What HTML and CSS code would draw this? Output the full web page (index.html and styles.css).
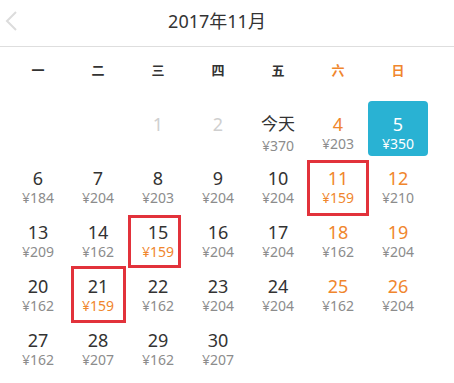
FILE: index.html
```html
<!DOCTYPE html>
<html lang="zh-CN">
<head>
<meta charset="utf-8">
<link rel="stylesheet" href="styles.css">
</head>
<body>
<div class="cal">
  <div class="head">
    <svg class="back" width="20" height="40" viewBox="0 0 20 40"><polyline points="16,12 7,21 16,30" fill="none" stroke="#dcdcdc" stroke-width="2"/></svg>
    <div class="title">2017年11月</div>
  </div>
  <div class="week">
    <span>一</span><span>二</span><span>三</span><span>四</span><span>五</span><span class="we">六</span><span class="we">日</span>
  </div>
  <div class="grid">
    <div class="cell"></div>
    <div class="cell"></div>
    <div class="cell off"><b>1</b></div>
    <div class="cell off"><b>2</b></div>
    <div class="cell today"><b>今天</b><i>¥370</i></div>
    <div class="cell we"><b>4</b><i>¥203</i></div>
    <div class="cell sel"><b>5</b><i>¥350</i></div>

    <div class="cell"><b>6</b><i>¥184</i></div>
    <div class="cell"><b>7</b><i>¥204</i></div>
    <div class="cell"><b>8</b><i>¥203</i></div>
    <div class="cell"><b>9</b><i>¥204</i></div>
    <div class="cell"><b>10</b><i>¥204</i></div>
    <div class="cell we low"><b>11</b><i>¥159</i><span class="mark m11"></span></div>
    <div class="cell we"><b>12</b><i>¥210</i></div>

    <div class="cell"><b>13</b><i>¥209</i></div>
    <div class="cell"><b>14</b><i>¥162</i></div>
    <div class="cell low"><b>15</b><i>¥159</i><span class="mark m15"></span></div>
    <div class="cell"><b>16</b><i>¥204</i></div>
    <div class="cell"><b>17</b><i>¥204</i></div>
    <div class="cell we"><b>18</b><i>¥162</i></div>
    <div class="cell we"><b>19</b><i>¥204</i></div>

    <div class="cell"><b>20</b><i>¥162</i></div>
    <div class="cell low"><b>21</b><i>¥159</i><span class="mark m21"></span></div>
    <div class="cell"><b>22</b><i>¥162</i></div>
    <div class="cell"><b>23</b><i>¥204</i></div>
    <div class="cell"><b>24</b><i>¥204</i></div>
    <div class="cell we"><b>25</b><i>¥162</i></div>
    <div class="cell we"><b>26</b><i>¥204</i></div>

    <div class="cell"><b>27</b><i>¥162</i></div>
    <div class="cell"><b>28</b><i>¥207</i></div>
    <div class="cell"><b>29</b><i>¥162</i></div>
    <div class="cell"><b>30</b><i>¥207</i></div>
  </div>
</div>
</body>
</html>
```
FILE: styles.css
```css
html, body {
  margin: 0;
  padding: 0;
  background: #fff;
}
body {
  font-family: "Noto Sans", "Noto Sans CJK SC", sans-serif;
  color: #333;
}
.cal {
  width: 454px;
}
.head {
  height: 46px;
  border-bottom: 1px solid #dedede;
  display: flex;
  align-items: center;
  justify-content: center;
  padding-right: 20px;
  box-sizing: content-box;
  position: relative;
}
.back {
  position: absolute;
  left: 0;
  top: 0;
}
.title {
  font-size: 18px;
  line-height: 24px;
  margin-top: -4px;
  color: #333;
}
.week {
  display: grid;
  grid-template-columns: repeat(7, 60px);
  padding-left: 8px;
  height: 44px;
  align-items: center;
}
.week span {
  text-align: center;
  font-size: 13px;
  font-weight: 700;
  color: #333;
  font-family: "Noto Sans CJK SC", sans-serif;
}
.week span.we {
  color: #f0862d;
}
.grid {
  display: grid;
  grid-template-columns: repeat(7, 60px);
  grid-auto-rows: 54px;
  padding: 10px 0 0 8px;
}
.cell {
  position: relative;
  display: flex;
  flex-direction: column;
  align-items: center;
  padding-top: 12px;
  box-sizing: border-box;
}
.cell b {
  font-weight: 400;
  font-size: 18px;
  line-height: 22px;
  color: #333;
}
.cell i {
  font-style: normal;
  font-size: 14px;
  line-height: 18px;
  color: #8c8c8c;
}
.cell.today {
  padding-top: 10px;
}
.cell.today b {
  font-size: 17px;
  line-height: 26px;
}
.cell.off b {
  color: #cfcfcf;
}
.cell.we b {
  color: #f0862d;
}
.cell.low i {
  color: #f0862d;
}
.cell.sel {
  background: #29b2d3;
  border-radius: 4px;
  height: 55px;
}
.cell.sel b,
.cell.sel i {
  color: #fff;
}
.mark {
  position: absolute;
  border: 3px solid #e2323b;
  box-sizing: border-box;
}
.m11 {
  left: -1px;
  top: 5px;
  width: 62px;
  height: 56px;
}
.m15 {
  left: 0;
  top: 6px;
  width: 53px;
  height: 53px;
}
.m21 {
  left: 3px;
  top: 3px;
  width: 55px;
  height: 57px;
}
```
